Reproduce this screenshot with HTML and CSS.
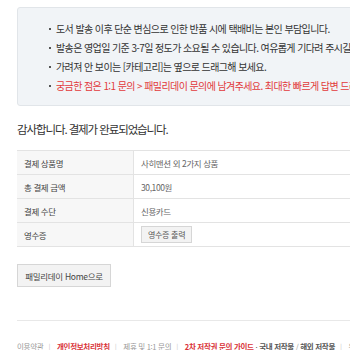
FILE: index.html
```html
<!DOCTYPE html>
<html lang="ko">
<head>
  <meta charset="UTF-8" />
  <meta name="viewport" content="width=device-width, initial-scale=1" />
  <title>결제 완료</title>
  <link rel="stylesheet" href="styles.css">
</head>
<body>
  <main class="page">
    <div class="notice">
      <ul class="notice-list">
        <li>도서 발송 이후 단순 변심으로 인한 반품 시에 택배비는 본인 부담입니다.</li>
        <li>발송은 영업일 기준 3-7일 정도가 소요될 수 있습니다. 여유롭게 기다려 주시길 바랍니다.</li>
        <li>가려져 안 보이는 [카테고리]는 옆으로 드래그해 보세요.</li>
        <li class="notice-alert">궁금한 점은 1:1 문의 &gt; 패밀리데이 문의에 남겨주세요. 최대한 빠르게 답변 드리겠습니다.</li>
      </ul>
    </div>

    <h2 class="done-title">감사합니다. 결제가 완료되었습니다.</h2>

    <table class="pay-table">
      <tr>
        <th>결제 상품명</th>
        <td>사히맨션 외 2가지 상품</td>
      </tr>
      <tr>
        <th>총 결제 금액</th>
        <td>30,100원</td>
      </tr>
      <tr>
        <th>결제 수단</th>
        <td>신용카드</td>
      </tr>
      <tr>
        <th>영수증</th>
        <td><button class="btn-receipt">영수증 출력</button></td>
      </tr>
    </table>

    <button class="btn-home">패밀리데이 Home으로</button>

    <footer class="footer">
      <a href="#">이용약관</a><span class="sep">|</span>
      <a href="#" class="strong-red">개인정보처리방침</a><span class="sep">|</span>
      <a href="#">제휴 및 1:1 문의</a><span class="sep">|</span>
      <a href="#" class="strong-red">2차 저작권 문의 가이드</a>
      <span class="dot">·</span>
      <a href="#" class="strong">국내 저작물</a> / <a href="#" class="strong">해외 저작물</a><span class="sep">|</span>
      <a href="#">위치기반서비스 이용약관</a>
    </footer>
  </main>
</body>
</html>
```

FILE: styles.css
```css
html, body {
  overflow: hidden;
}

body {
  margin: 0;
  padding: 0;
  background: #fff;
  color: #333;
  font-family: 'Noto Sans CJK KR', 'Noto Sans', sans-serif;
}

.page {
  width: 900px;
  padding: 7px 0 0 17px;
}

.notice {
  background: #f1f4f7;
  border: 1px solid #e1e5e9;
  border-radius: 3px;
  padding: 11px 0 10px 30px;
}

.notice-list {
  margin: 0;
  padding: 0;
  list-style: none;
}

.notice-list li {
  position: relative;
  padding-left: 8px;
  font-size: 10px;
  line-height: 19px;
  letter-spacing: -0.6px;
  white-space: nowrap;
  color: #333;
}

.notice-list li::before {
  content: '';
  position: absolute;
  left: 1px;
  top: 9px;
  width: 2px;
  height: 2px;
  background: #555;
}

.notice-list .notice-alert {
  color: #e2393b;
}

.done-title {
  margin: 14px 0 12px;
  font-size: 11.5px;
  font-weight: 400;
  line-height: 18px;
  letter-spacing: -1.1px;
  color: #333;
}

.pay-table {
  width: 100%;
  border-collapse: collapse;
  border-top: 1px solid #e3e3e3;
  font-size: 8.5px;
  letter-spacing: -0.4px;
}

.pay-table th,
.pay-table td {
  height: 23px;
  padding: 0 7px;
  border-bottom: 1px solid #e3e3e3;
  text-align: left;
  font-weight: 400;
}

.pay-table th {
  width: 102px;
  background: #f7f7f7;
  border-right: 1px solid #e3e3e3;
  color: #444;
}

.pay-table td {
  color: #666;
}

.btn-receipt {
  height: 17px;
  padding: 0 6px;
  border: 1px solid #d6d6d6;
  background: #f3f3f3;
  color: #555;
  font-family: inherit;
  font-size: 8px;
  letter-spacing: -0.3px;
  cursor: pointer;
}

.btn-home {
  display: block;
  margin-top: 17px;
  width: 94px;
  height: 23px;
  padding: 0;
  border: 1px solid #d6d6d6;
  background: #f3f3f3;
  color: #444;
  font-family: inherit;
  font-size: 8.5px;
  letter-spacing: -0.3px;
  cursor: pointer;
}

.footer {
  margin-top: 33px;
  padding-top: 20px;
  border-top: 1px solid #e8e8e8;
  font-size: 7.5px;
  letter-spacing: -0.3px;
  white-space: nowrap;
  color: #999;
}

.footer a {
  color: #999;
  text-decoration: none;
}

.footer .strong-red {
  color: #d9343a;
  font-weight: 700;
}

.footer .strong {
  color: #555;
  font-weight: 700;
}

.footer .sep {
  margin: 0 5px;
  color: #ccc;
}

.footer .dot {
  color: #555;
}
```
